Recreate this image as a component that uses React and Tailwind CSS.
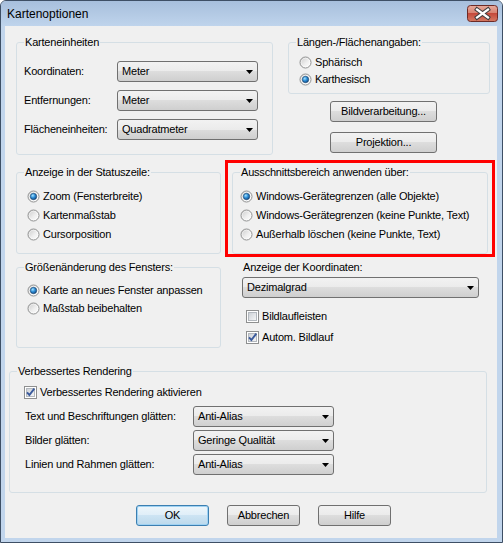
import React from "react";

const BTN_BG =
  "bg-[linear-gradient(to_bottom,#f2f2f2_0%,#ebebeb_50%,#dddddd_50%,#cfcfcf_100%)]";

function Defs() {
  return (
    <svg width="0" height="0" className="block">
      <defs>
        <linearGradient id="rgBody" x1="0" y1="0" x2="1" y2="1">
          <stop offset="0" stopColor="#c8c8c8" />
          <stop offset="0.55" stopColor="#efefef" />
          <stop offset="1" stopColor="#ffffff" />
        </linearGradient>
        <radialGradient id="rgDot" cx="0.38" cy="0.35" r="0.75">
          <stop offset="0" stopColor="#a6e3ff" />
          <stop offset="0.45" stopColor="#2e8fd8" />
          <stop offset="1" stopColor="#0b3f78" />
        </radialGradient>
        <linearGradient id="cbBody" x1="0" y1="0" x2="1" y2="1">
          <stop offset="0" stopColor="#cbcfd5" />
          <stop offset="1" stopColor="#f7f7f7" />
        </linearGradient>
        <linearGradient id="closeBg" x1="0" y1="0" x2="0" y2="1">
          <stop offset="0" stopColor="#e8ab9c" />
          <stop offset="0.5" stopColor="#d6806f" />
          <stop offset="0.5" stopColor="#c54a3b" />
          <stop offset="1" stopColor="#d57a63" />
        </linearGradient>
      </defs>
    </svg>
  );
}

function RadioIcon({ checked }) {
  return (
    <svg width="13" height="13" viewBox="0 0 13 13" className="shrink-0">
      <circle cx="6.5" cy="6.5" r="5.5" fill="url(#rgBody)" stroke="#8e8f8f" strokeWidth="1" />
      <circle cx="6.5" cy="6.5" r="4.3" fill="none" stroke="#ffffff" strokeOpacity="0.6" strokeWidth="0.8" />
      {checked && (
        <circle cx="6.5" cy="6.5" r="3.2" fill="url(#rgDot)" stroke="#173f6a" strokeWidth="0.6" />
      )}
    </svg>
  );
}

function CheckIcon({ checked }) {
  return (
    <svg width="13" height="13" viewBox="0 0 13 13" className="shrink-0">
      <rect x="0.5" y="0.5" width="12" height="12" fill="#ffffff" stroke="#8e8f8f" />
      <rect x="2.5" y="2.5" width="8" height="8" fill="url(#cbBody)" stroke="#b3b8be" />
      {checked && (
        <path
          d="M3 6.3 L5.4 9 L10.3 2.6"
          fill="none"
          stroke="#3a5a9c"
          strokeWidth="1.9"
          strokeLinejoin="miter"
        />
      )}
    </svg>
  );
}

function Radio({ checked, children }) {
  return (
    <div className="flex items-center gap-[3px] h-[13px] whitespace-nowrap">
      <RadioIcon checked={checked} />
      <span>{children}</span>
    </div>
  );
}

function Check({ checked, children, className = "" }) {
  return (
    <div className={`flex items-center gap-[3px] h-[13px] whitespace-nowrap ${className}`}>
      <CheckIcon checked={checked} />
      <span>{children}</span>
    </div>
  );
}

function Select({ value, className = "" }) {
  return (
    <div
      className={`flex items-center justify-between h-[21px] border border-[#707070] rounded-[3px] ${BTN_BG} pl-[4px] pr-[4px] shrink-0 ${className}`}
    >
      <span className="whitespace-nowrap">{value}</span>
      <svg width="7" height="4" viewBox="0 0 7 4">
        <path d="M0 0H7L3.5 4Z" fill="#000" />
      </svg>
    </div>
  );
}

function Button({ children, className = "" }) {
  return (
    <div
      className={`flex items-center justify-center h-[21px] border border-[#707070] rounded-[3px] ${BTN_BG} ${className}`}
    >
      {children}
    </div>
  );
}

function Group({ title, className = "", children }) {
  return (
    <div className={`relative border border-[#d5dfe5] rounded-[3px] shrink-0 ${className}`}>
      <span className="absolute left-[7px] top-[-7px] px-[1px] bg-[#f0f0f0] leading-[13px] whitespace-nowrap">
        {title}
      </span>
      {children}
    </div>
  );
}

export default function App() {
  return (
    <div className="w-[503px] h-[543px] bg-white font-['Liberation_Sans',Arial,sans-serif] text-[11px] leading-[13px] tracking-[-0.2px] text-black">
      <Defs />
      <div className="w-[503px] h-[543px] border border-[#3e4f65] rounded-t-[6px] bg-[#c1d5ec] flex flex-col overflow-hidden">
        {/* Title bar */}
        <div className="h-[25px] shrink-0 flex items-center justify-between pl-[6px] pr-[4px] bg-[linear-gradient(to_bottom,#a7bfdc,#bfd4ec)]">
          <span className="text-[12px] leading-[14px] tracking-normal text-[#000]">Kartenoptionen</span>
          <svg width="31" height="17" viewBox="0 0 31 17">
            <rect x="0.5" y="0.5" width="30" height="16" rx="3" fill="url(#closeBg)" stroke="#6d2b26" />
            <path d="M10 4.5 L21 12.5 M21 4.5 L10 12.5" stroke="#3f3f3f" strokeWidth="4.2" strokeLinecap="square" />
            <path d="M10 4.5 L21 12.5 M21 4.5 L10 12.5" stroke="#ffffff" strokeWidth="2.2" strokeLinecap="square" />
          </svg>
        </div>

        {/* Client area */}
        <div className="ml-[4px] w-[492px] h-[512px] bg-[#f0f0f0] flex flex-col shrink-0">
          {/* Row 1 */}
          <div className="flex items-start mt-[16px] h-[113px] shrink-0">
            <Group title="Karteneinheiten" className="ml-[11px] w-[257px] h-[113px]">
              <div className="flex flex-col gap-[8px] pt-[18px] pl-[7px]">
                <div className="flex items-center">
                  <span className="w-[93px]">Koordinaten:</span>
                  <Select value="Meter" className="w-[141px]" />
                </div>
                <div className="flex items-center">
                  <span className="w-[93px]">Entfernungen:</span>
                  <Select value="Meter" className="w-[141px]" />
                </div>
                <div className="flex items-center">
                  <span className="w-[93px] whitespace-nowrap">Flächeneinheiten:</span>
                  <Select value="Quadratmeter" className="w-[141px]" />
                </div>
              </div>
            </Group>
            <div className="ml-[15px] flex flex-col">
              <Group title="Längen-/Flächenangaben:" className="w-[202px] h-[52px]">
                <div className="flex flex-col gap-[4px] pt-[13px] pl-[10px]">
                  <Radio>Sphärisch</Radio>
                  <Radio checked>Karthesisch</Radio>
                </div>
              </Group>
              <Button className="mt-[7px] ml-[42px] w-[107px]">Bildverarbeitung...</Button>
              <Button className="mt-[10px] ml-[42px] w-[107px]">Projektion...</Button>
            </div>
          </div>

          {/* Row 2 */}
          <div className="flex items-start h-[216px] shrink-0">
            <div className="ml-[11px] w-[205px] flex flex-col">
              <Group title="Anzeige in der Statuszeile:" className="mt-[17px] h-[82px]">
                <div className="flex flex-col gap-[6px] pt-[17px] pl-[10px]">
                  <Radio checked>Zoom (Fensterbreite)</Radio>
                  <Radio>Kartenmaßstab</Radio>
                  <Radio>Cursorposition</Radio>
                </div>
              </Group>
              <Group title="Größenänderung des Fensters:" className="mt-[13px] h-[81px]">
                <div className="flex flex-col gap-[5px] pt-[16px] pl-[10px]">
                  <Radio checked>Karte an neues Fenster anpassen</Radio>
                  <Radio>Maßstab beibehalten</Radio>
                </div>
              </Group>
            </div>
            <div className="ml-[4px] flex flex-col">
              <div className="mt-[5px] w-[270px] h-[97px] border-[3px] border-[#ff0000] pl-[4px] pt-[9px]">
                <Group title="Ausschnittsbereich anwenden über:" className="w-[256px] h-[82px]">
                  <div className="flex flex-col gap-[6px] pt-[17px] pl-[7px]">
                    <Radio checked>Windows-Gerätegrenzen (alle Objekte)</Radio>
                    <Radio>Windows-Gerätegrenzen (keine Punkte, Text)</Radio>
                    <Radio>Außerhalb löschen (keine Punkte, Text)</Radio>
                  </div>
                </Group>
              </div>
              <span className="mt-[4px] pl-[18px] whitespace-nowrap">Anzeige der Koordinaten:</span>
              <Select value="Dezimalgrad" className="mt-[3px] ml-[17px] w-[237px]" />
              <Check className="mt-[12px] ml-[21px]">Bildlaufleisten</Check>
              <Check checked className="mt-[8px] ml-[21px]">Autom. Bildlauf</Check>
            </div>
          </div>

          {/* Row 3 */}
          <Group title="Verbessertes Rendering" className="ml-[4px] w-[478px] h-[122px]">
            <div className="flex flex-col pt-[14px] pl-[14px]">
              <Check checked>Verbessertes Rendering aktivieren</Check>
              <div className="flex flex-col gap-[3px] mt-[7px]">
                <div className="flex items-center">
                  <span className="w-[169px] pl-[1px] whitespace-nowrap">Text und Beschriftungen glätten:</span>
                  <Select value="Anti-Alias" className="w-[141px]" />
                </div>
                <div className="flex items-center">
                  <span className="w-[169px] pl-[1px] whitespace-nowrap">Bilder glätten:</span>
                  <Select value="Geringe Qualität" className="w-[141px]" />
                </div>
                <div className="flex items-center">
                  <span className="w-[169px] pl-[1px] whitespace-nowrap">Linien und Rahmen glätten:</span>
                  <Select value="Anti-Alias" className="w-[141px]" />
                </div>
              </div>
            </div>
          </Group>

          {/* Buttons */}
          <div className="flex gap-[18px] mt-[12px] ml-[131px]">
            <div className="flex items-center justify-center w-[73px] h-[21px] border border-[#3c7fb1] rounded-[3px] bg-[linear-gradient(to_bottom,#eef6fb_0%,#dfeef8_50%,#cde4f3_50%,#bcd9ec_100%)] shadow-[inset_0_0_0_1px_#9fd2f3]">
              OK
            </div>
            <Button className="w-[73px]">Abbrechen</Button>
            <Button className="w-[73px]">Hilfe</Button>
          </div>
        </div>
      </div>
    </div>
  );
}
